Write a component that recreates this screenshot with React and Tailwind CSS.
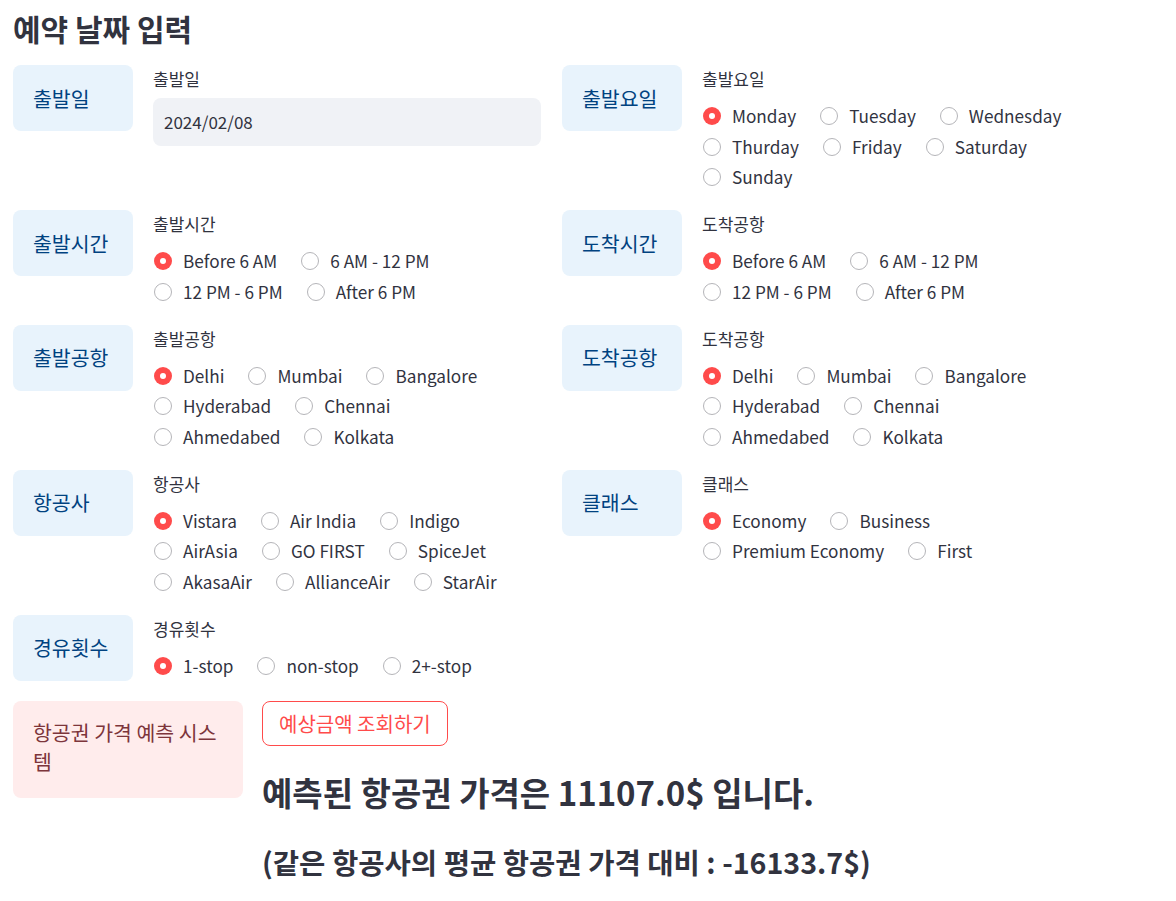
import React from 'react';

const font = { fontFamily: '"Noto Sans CJK KR", "Noto Sans", sans-serif' };

const Radio = ({ label, checked }) => (
  <div className="flex items-center gap-[11px] h-[30.5px]">
    {checked ? (
      <span className="w-[18px] h-[18px] rounded-full bg-[#ff4b4b] flex items-center justify-center">
        <span className="w-[6px] h-[6px] rounded-full bg-white" />
      </span>
    ) : (
      <span className="w-[18px] h-[18px] rounded-full border border-[#b5b5b9] bg-white" />
    )}
    <span className="text-[17.2px] text-[#31333f] leading-[30px]">{label}</span>
  </div>
);

const RadioGroup = ({ rows, selected }) => (
  <div className="flex flex-col mt-[8px] pl-px">
    {rows.map((row, i) => (
      <div key={i} className="flex gap-x-[24px]">
        {row.map((opt) => (
          <Radio key={opt} label={opt} checked={opt === selected} />
        ))}
      </div>
    ))}
  </div>
);

const InfoBox = ({ children }) => (
  <div className="w-[120px] h-[66px] shrink-0 rounded-lg bg-[#e8f3fc] text-[#004280] text-[20.5px] flex items-center pl-5">
    {children}
  </div>
);

const Field = ({ title, label, children }) => (
  <div className="flex gap-5">
    <InfoBox>{title}</InfoBox>
    <div className="flex-1 flex flex-col">
      <div className="h-7 leading-7 text-[17px] text-[#31333f]">{label}</div>
      {children}
    </div>
  </div>
);

const times = [['Before 6 AM', '6 AM - 12 PM'], ['12 PM - 6 PM', 'After 6 PM']];
const cities = [['Delhi', 'Mumbai', 'Bangalore'], ['Hyderabad', 'Chennai'], ['Ahmedabed', 'Kolkata']];

export default function App() {
  return (
    <div className="min-h-screen bg-white pl-[13px]" style={font}>
      <h3 className="text-[30px] font-bold text-[#31333f] leading-[56px] mb-[9px]">예약 날짜 입력</h3>

      <div className="grid grid-cols-[528px_528px] gap-x-[21px] gap-y-[17.5px]">
        <Field title="출발일" label="출발일">
          <div className="mt-[5px] h-[48px] rounded-lg bg-[#f0f2f6] flex items-center px-[11px] text-[17px] text-[#31333f]">
            2024/02/08
          </div>
        </Field>
        <Field title="출발요일" label="출발요일">
          <RadioGroup
            rows={[['Monday', 'Tuesday', 'Wednesday'], ['Thurday', 'Friday', 'Saturday'], ['Sunday']]}
            selected="Monday"
          />
        </Field>

        <Field title="출발시간" label="출발시간">
          <RadioGroup rows={times} selected="Before 6 AM" />
        </Field>
        <Field title="도착시간" label="도착공항">
          <RadioGroup rows={times} selected="Before 6 AM" />
        </Field>

        <Field title="출발공항" label="출발공항">
          <RadioGroup rows={cities} selected="Delhi" />
        </Field>
        <Field title="도착공항" label="도착공항">
          <RadioGroup rows={cities} selected="Delhi" />
        </Field>

        <Field title="항공사" label="항공사">
          <RadioGroup
            rows={[['Vistara', 'Air India', 'Indigo'], ['AirAsia', 'GO FIRST', 'SpiceJet'], ['AkasaAir', 'AllianceAir', 'StarAir']]}
            selected="Vistara"
          />
        </Field>
        <Field title="클래스" label="클래스">
          <RadioGroup rows={[['Economy', 'Business'], ['Premium Economy', 'First']]} selected="Economy" />
        </Field>

        <Field title="경유횟수" label="경유횟수">
          <RadioGroup rows={[['1-stop', 'non-stop', '2+-stop']]} selected="1-stop" />
        </Field>
        <div />
      </div>

      <div className="flex gap-[19px] mt-5">
        <div className="w-[230px] shrink-0 self-start rounded-lg bg-[#ffecec] text-[#7d353b] text-[20.5px] leading-[29px] px-5 pt-[17px] pb-[22px]">
          항공권 가격 예측 시스템
        </div>
        <div className="flex flex-col items-start">
          <button className="h-[45px] px-4 rounded-lg border border-[#ff4b4b] text-[#ff4b4b] text-[20px] bg-white">
            예상금액 조회하기
          </button>
          <div className="mt-[22px] text-[33px] font-bold text-[#31333f] leading-[48px]">
            예측된 항공권 가격은 11107.0$ 입니다.
          </div>
          <div className="mt-[26px] text-[28.6px] font-bold text-[#31333f] leading-[40px]">
            (같은 항공사의 평균 항공권 가격 대비 : -16133.7$)
          </div>
        </div>
      </div>
    </div>
  );
}
